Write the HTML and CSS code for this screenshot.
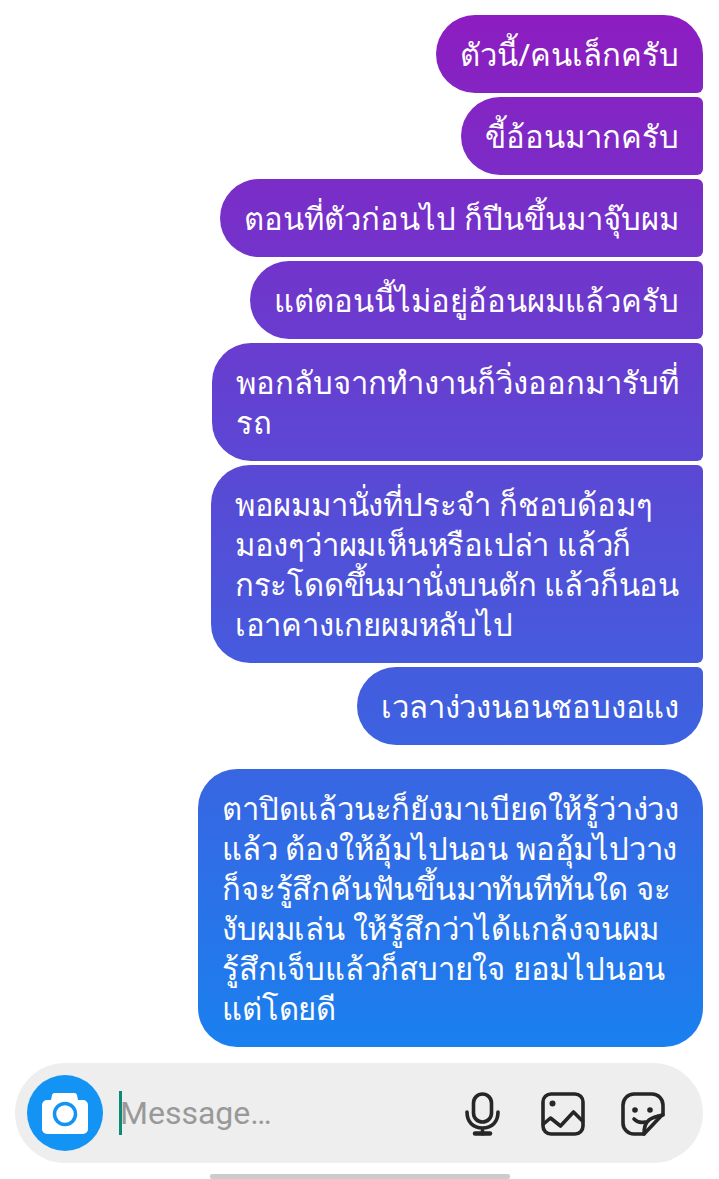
FILE: index.html
```html
<!DOCTYPE html>
<html>
<head>
    <title>Chat</title>
    <link rel="stylesheet" href="styles.css">
</head>
<body>
    <div class="thread">
        <div class="bubble top">ตัวนี้/คนเล็กครับ</div>
        <div class="bubble mid">ขี้อ้อนมากครับ</div>
        <div class="bubble mid">ตอนที่ตัวก่อนไป ก็ปีนขึ้นมาจุ๊บผม</div>
        <div class="bubble mid">แต่ตอนนี้ไม่อยู่อ้อนผมแล้วครับ</div>
        <div class="bubble mid">พอกลับจากทำงานก็วิ่งออกมารับที่<br>รถ</div>
        <div class="bubble mid snug">พอผมมานั่งที่ประจำ ก็ชอบด้อมๆ<br>มองๆว่าผมเห็นหรือเปล่า แล้วก็<br>กระโดดขึ้นมานั่งบนตัก แล้วก็นอน<br>เอาคางเกยผมหลับไป</div>
        <div class="bubble end snug">เวลาง่วงนอนชอบงอแง</div>
        <div class="bubble solo snug">ตาปิดแล้วนะก็ยังมาเบียดให้รู้ว่าง่วง<br>แล้ว ต้องให้อุ้มไปนอน พออุ้มไปวาง<br>ก็จะรู้สึกคันฟันขึ้นมาทันทีทันใด จะ<br>งับผมเล่น ให้รู้สึกว่าได้แกล้งจนผม<br>รู้สึกเจ็บแล้วก็สบายใจ ยอมไปนอน<br>แต่โดยดี</div>
    </div>
    <div class="composer">
        <div class="camera">
            <svg width="46" height="41" viewBox="0 0 46 41">
                <path fill="#fff" d="M12 0h20a3 3 0 0 1 3 2l1 5h5a5 5 0 0 1 5 5v24a5 5 0 0 1-5 5H5a5 5 0 0 1-5-5V12a5 5 0 0 1 5-5h4l1-5a3 3 0 0 1 2-2z"/>
                <circle cx="23" cy="21" r="10.5" fill="#fff" stroke="#1394f4" stroke-width="3.5"/>
            </svg>
        </div>
        <div class="field"><span class="caret"></span><span class="placeholder">Message…</span></div>
        <svg class="tool mic" width="35" height="44" viewBox="0 0 35 44" fill="none" stroke="#262626" stroke-width="3.6" stroke-linecap="round">
            <rect x="8.5" y="2" width="18" height="28" rx="9"/>
            <path d="M2 20c0 10 6 16 15.500 16S33 30 33 20M17.500 36v6"/>
            <path d="M10 41.500h15" stroke-width="4.500"/>
        </svg>
        <svg class="tool picture" width="44" height="44" viewBox="0 0 44 44" fill="none" stroke="#262626" stroke-width="3.6" stroke-linejoin="round" stroke-linecap="round">
            <rect x="2" y="2" width="40" height="40" rx="8"/>
            <circle cx="11.500" cy="11.500" r="3" fill="#262626" stroke="none"/>
            <path d="M2.500 32l7-6 10 8 13-14 9 9"/>
        </svg>
        <svg class="tool sticker" width="44" height="44" viewBox="0 0 44 44" fill="none" stroke="#262626" stroke-width="3.6" stroke-linejoin="round" stroke-linecap="round">
            <path d="M23 42H13A11 11 0 0 1 2 31V13A11 11 0 0 1 13 2h18a11 11 0 0 1 11 11v9z"/>
            <path d="M23 42c0-4 1-11 5-14 4-3 9-4 14-5"/>
            <circle cx="14" cy="18" r="2.800" fill="#262626" stroke="none"/>
            <circle cx="29" cy="18" r="2.800" fill="#262626" stroke="none"/>
            <path d="M13 27c3 3 7 4 11 3"/>
        </svg>
    </div>
    <div class="home-bar"></div>
</body>
</html>
```
FILE: styles.css
```css
* {
    box-sizing: border-box;
}

html, body {
    height: 100%;
}

body {
    margin: 0;
    background: #fff;
    overflow: hidden;
    font-family: "Noto Sans", sans-serif;
}

.thread {
    display: flex;
    flex-direction: column;
    align-items: flex-end;
    gap: 4px;
    padding: 15px 16px 0 0;
}

.bubble {
    padding: 19px 24px;
    font-size: 31px;
    line-height: 40px;
    color: #fff;
    white-space: nowrap;
    background: linear-gradient(#8f1bbf, #1a80ef 1047px) fixed;
}

.snug {
    letter-spacing: -0.2px;
}

.top {
    border-radius: 39px 39px 6px 39px;
}

.mid {
    border-radius: 39px 6px 6px 39px;
}

.end {
    border-radius: 39px 6px 39px 39px;
}

.solo {
    margin-top: 20px;
    border-radius: 39px;
}

.composer {
    display: flex;
    align-items: center;
    height: 100px;
    margin: 16px 16px 0 15px;
    padding: 0 38px 0 12px;
    border-radius: 50px;
    background: #eee;
}

.camera {
    display: flex;
    align-items: center;
    justify-content: center;
    width: 76px;
    height: 76px;
    border-radius: 50%;
    background: #1394f4;
}

.field {
    display: flex;
    align-items: center;
    flex: 1;
    margin-left: 16px;
}

.caret {
    width: 3px;
    height: 44px;
    background: #0b8a78;
}

.placeholder {
    margin-left: -2px;
    font-family: Roboto, sans-serif;
    font-size: 32px;
    color: #999;
}

.tool {
    margin-top: 1px;
}

.picture {
    margin-left: 41px;
}

.sticker {
    margin-left: 36px;
}

.home-bar {
    width: 300px;
    height: 5px;
    margin: 11px auto 0;
    border-radius: 2px;
    background: #ccc;
}
```
